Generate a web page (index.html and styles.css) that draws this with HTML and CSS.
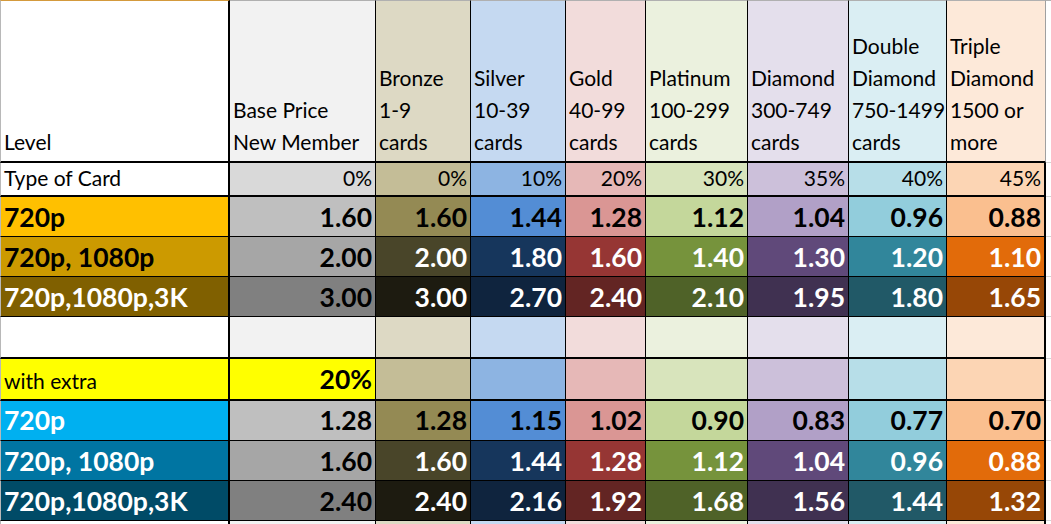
FILE: index.html
```html
<!DOCTYPE html>
<html>
<head>
<meta charset="utf-8">
<link rel="stylesheet" href="styles.css">
</head>
<body>
<div class="sheet">
  <!-- header -->
  <div class="c hd first top-o"><div>Level</div></div>
  <div class="c hd base0 top-g"><div>Base Price</div><div>New Member</div></div>
  <div class="c hd bz0 top-g"><div>Bronze</div><div>1-9</div><div>cards</div></div>
  <div class="c hd sv0 top-g"><div>Silver</div><div>10-39</div><div>cards</div></div>
  <div class="c hd gd0 top-g"><div>Gold</div><div>40-99</div><div>cards</div></div>
  <div class="c hd pt0 top-g"><div>Platinum</div><div>100-299</div><div>cards</div></div>
  <div class="c hd dm0 top-g"><div>Diamond</div><div>300-749</div><div>cards</div></div>
  <div class="c hd dd0 top-g"><div>Double</div><div>Diamond</div><div>750-1499</div><div>cards</div></div>
  <div class="c hd td0 top-g last-h"><div>Triple</div><div>Diamond</div><div>1500 or</div><div>more</div></div>
  <div class="c fill top-g"></div>

  <!-- type of card -->
  <div class="c reg first thick">Type of Card</div>
  <div class="c reg num base1 thick">0%</div>
  <div class="c reg num bz1 thick">0%</div>
  <div class="c reg num sv1 thick">10%</div>
  <div class="c reg num gd1 thick">20%</div>
  <div class="c reg num pt1 thick">30%</div>
  <div class="c reg num dm1 thick">35%</div>
  <div class="c reg num dd1 thick">40%</div>
  <div class="c reg num td1 thick last">45%</div>
  <div class="c fill"></div>

  <!-- 720p -->
  <div class="c big first amber1">720p</div>
  <div class="c big num base2">1.60</div>
  <div class="c big num bz2">1.60</div>
  <div class="c big num sv2">1.44</div>
  <div class="c big num gd2">1.28</div>
  <div class="c big num pt2">1.12</div>
  <div class="c big num dm2">1.04</div>
  <div class="c big num dd2">0.96</div>
  <div class="c big num td2 last">0.88</div>
  <div class="c fill"></div>

  <!-- 720p, 1080p -->
  <div class="c big first amber2">720p, 1080p</div>
  <div class="c big num base3">2.00</div>
  <div class="c big num bz3 w">2.00</div>
  <div class="c big num sv3 w">1.80</div>
  <div class="c big num gd3 w">1.60</div>
  <div class="c big num pt3 w">1.40</div>
  <div class="c big num dm3 w">1.30</div>
  <div class="c big num dd3 w">1.20</div>
  <div class="c big num td3 w last">1.10</div>
  <div class="c fill"></div>

  <!-- 720p,1080p,3K -->
  <div class="c big first amber3 w">720p,1080p,3K</div>
  <div class="c big num base4">3.00</div>
  <div class="c big num bz4 w">3.00</div>
  <div class="c big num sv4 w">2.70</div>
  <div class="c big num gd4 w">2.40</div>
  <div class="c big num pt4 w">2.10</div>
  <div class="c big num dm4 w">1.95</div>
  <div class="c big num dd4 w">1.80</div>
  <div class="c big num td4 w last">1.65</div>
  <div class="c fill"></div>

  <!-- blank -->
  <div class="c first thick"></div>
  <div class="c base0 thick"></div>
  <div class="c bz0 thick"></div>
  <div class="c sv0 thick"></div>
  <div class="c gd0 thick"></div>
  <div class="c pt0 thick"></div>
  <div class="c dm0 thick"></div>
  <div class="c dd0 thick"></div>
  <div class="c td0 thick last"></div>
  <div class="c fill"></div>

  <!-- with extra -->
  <div class="c reg first yellow thick xpad">with extra</div>
  <div class="c big num yellow thick xpad">20%</div>
  <div class="c bz1 thick"></div>
  <div class="c sv1 thick"></div>
  <div class="c gd1 thick"></div>
  <div class="c pt1 thick"></div>
  <div class="c dm1 thick"></div>
  <div class="c dd1 thick"></div>
  <div class="c td1 thick last"></div>
  <div class="c fill"></div>

  <!-- 720p (extra) -->
  <div class="c big first cyan1 w xpad">720p</div>
  <div class="c big num base2 xpad">1.28</div>
  <div class="c big num bz2 xpad">1.28</div>
  <div class="c big num sv2 xpad">1.15</div>
  <div class="c big num gd2 xpad">1.02</div>
  <div class="c big num pt2 xpad">0.90</div>
  <div class="c big num dm2 xpad">0.83</div>
  <div class="c big num dd2 xpad">0.77</div>
  <div class="c big num td2 last xpad">0.70</div>
  <div class="c fill"></div>

  <!-- 720p, 1080p (extra) -->
  <div class="c big first cyan2 w">720p, 1080p</div>
  <div class="c big num base3">1.60</div>
  <div class="c big num bz3 w">1.60</div>
  <div class="c big num sv3 w">1.44</div>
  <div class="c big num gd3 w">1.28</div>
  <div class="c big num pt3 w">1.12</div>
  <div class="c big num dm3 w">1.04</div>
  <div class="c big num dd3 w">0.96</div>
  <div class="c big num td3 w last">0.88</div>
  <div class="c fill"></div>

  <!-- 720p,1080p,3K (extra) -->
  <div class="c big first cyan3 w">720p,1080p,3K</div>
  <div class="c big num base4">2.40</div>
  <div class="c big num bz4 w">2.40</div>
  <div class="c big num sv4 w">2.16</div>
  <div class="c big num gd4 w">1.92</div>
  <div class="c big num pt4 w">1.68</div>
  <div class="c big num dm4 w">1.56</div>
  <div class="c big num dd4 w">1.44</div>
  <div class="c big num td4 w last">1.32</div>
  <div class="c fill"></div>

  <!-- tail -->
  <div class="c first"></div>
  <div class="c base0"></div>
  <div class="c bz0"></div>
  <div class="c sv0"></div>
  <div class="c gd0"></div>
  <div class="c pt0"></div>
  <div class="c dm0"></div>
  <div class="c dd0"></div>
  <div class="c td0 last"></div>
  <div class="c fill"></div>
</div>
</body>
</html>
```
FILE: styles.css
```css
html, body {
  margin: 0;
  padding: 0;
  background: #ffffff;
  overflow: hidden;
}

.sheet {
  display: grid;
  grid-template-columns: 230px 146px 95px 95px 80px 102px 101px 98px 99px 40px;
  grid-template-rows: 163px 34px 40px 40px 40px 42px 42px 40px 40px 40px 20px;
  width: 1086px;
  height: 524px;
  font-family: "Lato", "Liberation Sans", sans-serif;
  color: #000;
}

.c {
  box-sizing: border-box;
  border-right: 1px solid #000;
  border-bottom: 1px solid #000;
  display: flex;
  align-items: flex-end;
  padding: 0 3px 4px 3px;
  white-space: nowrap;
  overflow: hidden;
  min-width: 0;
}

.first {
  border-right-width: 2px;
  border-left: 1px solid #b8b8b8;
  padding-left: 3px;
  background: #ffffff;
}

.last {
  border-right-width: 2px;
}

.last-h {
  border-right-color: #a0a0a0;
}

.thick {
  border-bottom-width: 2px;
}

.fill {
  border-right: none;
  border-bottom: 1px solid #d4d4d4;
  background: #ffffff;
}

.top-o { border-top: 1px solid #d49a3c; }
.top-g { border-top: 1px solid #b0b0b0; }

.hd {
  flex-direction: column;
  justify-content: flex-end;
  align-items: flex-start;
  padding-bottom: 3px;
  border-bottom-width: 2px;
  font-size: 21px;
  line-height: 32px;
}

.hd.fill {
  border-bottom-width: 1px;
}

.reg {
  font-size: 21px;
  line-height: 26px;
}

.big {
  font-size: 26.5px;
  font-weight: 700;
  line-height: 30px;
}

.num {
  justify-content: flex-end;
}

.xpad {
  padding-bottom: 5px;
}

.w { color: #ffffff; }

/* left label column */
.amber1 { background: #ffc000; }
.amber2 { background: #cc9a00; }
.amber3 { background: #806000; }
.cyan1 { background: #00b0f0; }
.cyan2 { background: #0075a2; }
.cyan3 { background: #004b67; }
.yellow { background: #ffff00; }

/* base price column */
.base0 { background: #f2f2f2; }
.base1 { background: #d9d9d9; }
.base2 { background: #bfbfbf; }
.base3 { background: #a6a6a6; }
.base4 { background: #808080; }

/* bronze */
.bz0 { background: #ddd9c4; }
.bz1 { background: #c4bd97; }
.bz2 { background: #948a54; }
.bz3 { background: #494529; }
.bz4 { background: #1d1b10; }

/* silver */
.sv0 { background: #c5d9f1; }
.sv1 { background: #8db4e2; }
.sv2 { background: #538dd5; }
.sv3 { background: #16365c; }
.sv4 { background: #0f243e; }

/* gold */
.gd0 { background: #f2dcdb; }
.gd1 { background: #e6b8b7; }
.gd2 { background: #da9694; }
.gd3 { background: #963634; }
.gd4 { background: #632523; }

/* platinum */
.pt0 { background: #ebf1de; }
.pt1 { background: #d8e4bc; }
.pt2 { background: #c4d79b; }
.pt3 { background: #76933c; }
.pt4 { background: #4f6228; }

/* diamond */
.dm0 { background: #e4dfec; }
.dm1 { background: #ccc0da; }
.dm2 { background: #b1a0c7; }
.dm3 { background: #60497a; }
.dm4 { background: #403151; }

/* double diamond */
.dd0 { background: #daeef3; }
.dd1 { background: #b7dee8; }
.dd2 { background: #92cddc; }
.dd3 { background: #31869b; }
.dd4 { background: #215967; }

/* triple diamond */
.td0 { background: #fde9d9; }
.td1 { background: #fcd5b4; }
.td2 { background: #fabf8f; }
.td3 { background: #e26b0a; }
.td4 { background: #974706; }
```
